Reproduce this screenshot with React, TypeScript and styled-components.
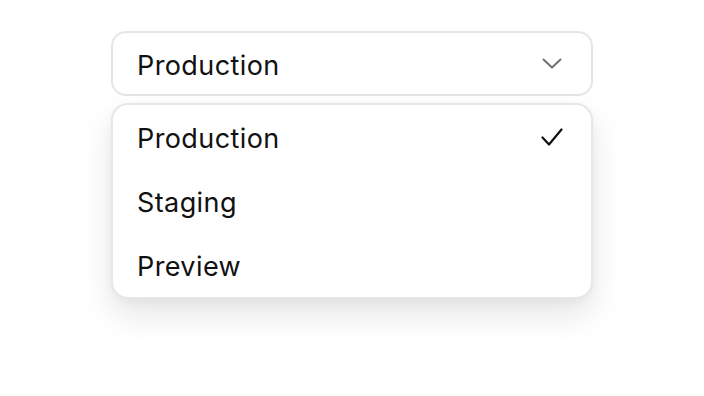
import React from 'react'
import styled, { createGlobalStyle } from 'styled-components'

const GlobalStyle = createGlobalStyle`
    html, body {
        margin: 0;
        padding: 0;
        background: #ffffff;
    }
    body {
        font-family: Inter, 'Noto Sans', sans-serif;
        color: #111111;
    }
`

const options = ['Production', 'Staging', 'Preview']

export default function App() {
    const selected = 'Production'

    return (
        <>
            <GlobalStyle />
            <Page>
                <Select>
                    <Trigger>
                        <Label>{selected}</Label>
                        <Chevron viewBox='0 0 20 11' fill='none'>
                            <path d='M1.5 1.5 L10 9.5 L18.5 1.5' stroke='#707070' strokeWidth='2' strokeLinecap='round' strokeLinejoin='round' />
                        </Chevron>
                    </Trigger>
                    <Menu>
                        {options.map(opt => (
                            <Item key={opt}>
                                <Label>{opt}</Label>
                                {opt === selected && (
                                    <Check viewBox='0 0 22 19' fill='none'>
                                        <path d='M1.5 9.5 L8 16.5 L20.5 1.5' stroke='#111111' strokeWidth='2.2' strokeLinecap='round' strokeLinejoin='round' />
                                    </Check>
                                )}
                            </Item>
                        ))}
                    </Menu>
                </Select>
            </Page>
        </>
    )
}

const Page = styled.div`
    min-height: 100vh;
    box-sizing: border-box;
    padding: 31px 0 0 111px;
`

const Select = styled.div`
    width: 482px;
    display: flex;
    flex-direction: column;
    gap: 7px;
`

const Trigger = styled.div`
    height: 65px;
    box-sizing: border-box;
    border: 2px solid #e5e5e5;
    border-radius: 15px;
    display: flex;
    align-items: center;
    justify-content: space-between;
    padding: 0 29px 0 24px;
    background: #fff;
`

const Label = styled.span`
    font-size: 27px;
    letter-spacing: 0.4px;
    line-height: 1;
    padding-top: 3px;
`

const Chevron = styled.svg`
    width: 20px;
    height: 11px;
`

const Menu = styled.div`
    box-sizing: border-box;
    border: 2px solid #e7e7e7;
    border-radius: 17px;
    background: #fff;
    box-shadow: 0 16px 32px rgba(0, 0, 0, 0.1), 0 3px 8px rgba(0, 0, 0, 0.04);
    display: flex;
    flex-direction: column;
`

const Item = styled.div`
    height: 64px;
    display: flex;
    align-items: center;
    justify-content: space-between;
    padding: 0 28px 0 24px;
`

const Check = styled.svg`
    width: 22px;
    height: 19px;
`
